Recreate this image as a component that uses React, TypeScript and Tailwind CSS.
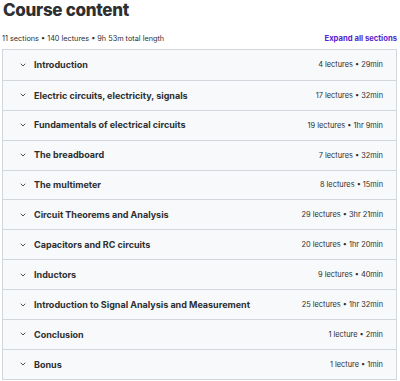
import { FiChevronDown } from "react-icons/fi";

const sections = [
  { title: "Introduction", meta: "4 lectures • 29min" },
  { title: "Electric circuits, electricity, signals", meta: "17 lectures • 32min" },
  { title: "Fundamentals of electrical circuits", meta: "19 lectures • 1hr 9min" },
  { title: "The breadboard", meta: "7 lectures • 32min" },
  { title: "The multimeter", meta: "8 lectures • 15min" },
  { title: "Circuit Theorems and Analysis", meta: "29 lectures • 3hr 21min" },
  { title: "Capacitors and RC circuits", meta: "20 lectures • 1hr 20min" },
  { title: "Inductors", meta: "9 lectures • 40min" },
  { title: "Introduction to Signal Analysis and Measurement", meta: "25 lectures • 1hr 32min" },
  { title: "Conclusion", meta: "1 lecture • 2min" },
  { title: "Bonus", meta: "1 lecture • 1min" },
];

export default function App() {
  return (
    <div className="w-[400px] h-[381px] bg-white overflow-hidden font-['Inter',sans-serif] text-[#2d2f31]">
      {/* heading */}
      <h2 className="pl-[3px] text-[17px] leading-[20px] font-extrabold tracking-[-0.3px]">Course content</h2>

      {/* summary */}
      <div className="flex items-center justify-between pl-[2px] pr-[3px] mt-[13px] h-[12px]">
        <span className="text-[7.3px]">11 sections • 140 lectures • 9h 53m total length</span>
        <button className="text-[7.7px] font-bold text-[#5624d0]">Expand all sections</button>
      </div>

      {/* sections */}
      <div className="ml-[2px] w-[395px] mt-[4px] border border-[#d1d7dc]">
        {sections.map((s, i) => (
          <div
            key={s.title}
            className={`flex items-center justify-between h-[29.9px] bg-[#f7f9fa] pl-[16px] pr-[13px] ${i > 0 ? "border-t border-[#d1d7dc]" : ""}`}
          >
            <div className="flex items-center gap-[7px]">
              <FiChevronDown className="w-[8px] h-[8px] stroke-[2.5] text-[#2d2f31]" />
              <span className="text-[9px] font-bold">{s.title}</span>
            </div>
            <span className="text-[7.4px]">{s.meta}</span>
          </div>
        ))}
      </div>
    </div>
  );
}
